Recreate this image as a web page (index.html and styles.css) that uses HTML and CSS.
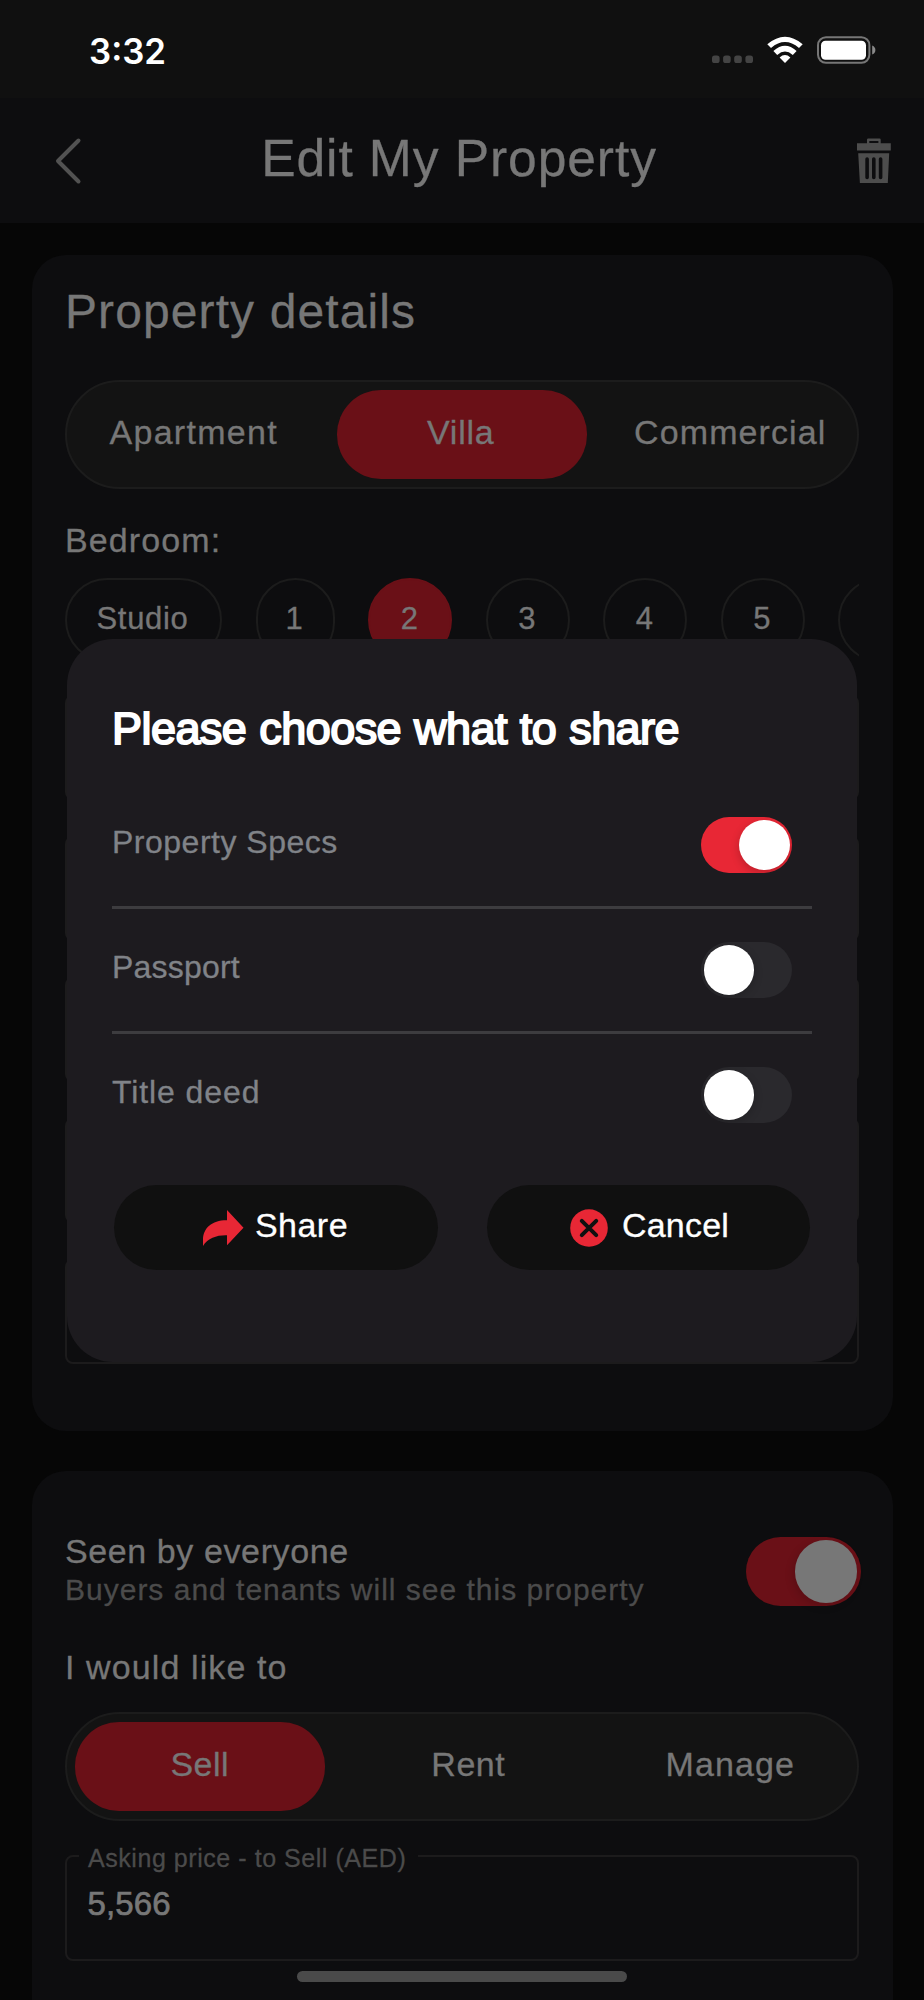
FILE: index.html
```html
<!DOCTYPE html>
<html lang="en">
<head>
<meta charset="utf-8">
<title>Edit My Property</title>
<link rel="stylesheet" href="styles.css">
</head>
<body>
<div class="screen">
  <div class="status">
    <span class="time">3:32</span>
    <div class="status-icons">
      <svg class="signal" width="42" height="28" viewBox="0 0 42 28"><g fill="#444"><rect x="0" y="19.5" width="7.6" height="7.6" rx="2.6"/><rect x="11.1" y="19.5" width="7.6" height="7.6" rx="2.6"/><rect x="22.2" y="19.5" width="7.6" height="7.6" rx="2.6"/><rect x="33.4" y="19.5" width="7.6" height="7.6" rx="2.6"/></g></svg>
      <svg class="wifi" width="36" height="28" viewBox="0 0 36 28"><g fill="#fff"><path d="M18 27 L12.6 21.4 Q18 16.8 23.4 21.4 Z"/><path d="M6.4 14.9 Q18 4.6 29.6 14.9 L25.8 18.9 Q18 12 10.2 18.9 Z"/><path d="M0.3 8.2 Q18 -6.9 35.7 8.2 L32 12 Q18 0.2 4 12 Z"/></g></svg>
      <svg class="battery" width="60" height="28" viewBox="0 0 60 28"><rect x="1" y="1.2" width="51.4" height="25.6" rx="8" fill="none" stroke="#767676" stroke-width="2"/><rect x="4" y="4.8" width="45" height="19" rx="4.5" fill="#fff"/><path d="M55.2 9.5 Q58.4 11 58.4 14 Q58.4 17 55.2 18.6 Z" fill="#8a8a8a"/></svg>
    </div>
  </div>

  <header class="header">
    <svg class="back" width="28" height="48" viewBox="0 0 28 48"><path d="M24.5 4 L4 24.5 L24.5 45" transform="translate(0 -.5)" fill="none" stroke="#525252" stroke-width="4" stroke-linecap="round" stroke-linejoin="round"/></svg>
    <h1 class="title">Edit My Property</h1>
    <svg class="trash" width="34" height="46" viewBox="0 0 34 46"><g fill="#4d4d4d"><path fill-rule="evenodd" d="M10 6V1.8Q10 .5 11.3 .5H22.4Q23.7 .5 23.7 1.8V6ZM12.3 5H21.4V3H12.3Z"/><path d="M0 5.2H33.8V12.4H0Z"/><path fill-rule="evenodd" d="M1.2 15.2H32.2L30.8 45H2.9ZM8.3 21V39.5A1.8 1.8 0 0 0 11.9 39.5V21A1.8 1.8 0 0 0 8.3 21ZM15 21V39.5A1.8 1.8 0 0 0 18.6 39.5V21A1.8 1.8 0 0 0 15 21ZM21.8 21V39.5A1.8 1.8 0 0 0 25.4 39.5V21A1.8 1.8 0 0 0 21.8 21Z"/></g></svg>
  </header>

  <main class="content">
    <section class="card card-details">
      <h2 class="card-title">Property details</h2>
      <div class="segments segments-type">
        <span class="segment nudge-left">Apartment</span>
        <span class="segment active villa">Villa</span>
        <span class="segment nudge-right">Commercial</span>
      </div>
      <div class="label label-bedroom">Bedroom:</div>
      <div class="chips">
        <span class="chip chip-wide">Studio</span>
        <span class="chip chip-one">1</span>
        <span class="chip chip-active">2</span>
        <span class="chip">3</span>
        <span class="chip">4</span>
        <span class="chip">5</span>
        <span class="chip"></span>
      </div>
      <div class="fields">
        <div class="field"></div>
        <div class="field"></div>
        <div class="field"></div>
        <div class="field"></div>
        <div class="field"></div>
      </div>
    </section>

    <section class="card card-listing">
      <div class="visibility">
        <div>
          <div class="visibility-title">Seen by everyone</div>
          <div class="visibility-hint">Buyers and tenants will see this property</div>
        </div>
        <div class="switch-large"><div class="knob-large"></div></div>
      </div>
      <div class="label label-intent">I would like to</div>
      <div class="segments segments-intent">
        <span class="segment active sell">Sell</span>
        <span class="segment nudge-right rent">Rent</span>
        <span class="segment nudge-right">Manage</span>
      </div>
      <div class="field price">
        <span class="price-label">Asking price - to Sell (AED)</span>
        <span class="price-value">5,566</span>
      </div>
    </section>
  </main>

  <div class="modal">
    <h3 class="modal-title">Please choose what to share</h3>
    <div class="option"><span class="option-name">Property Specs</span><div class="switch on"><div class="knob"></div></div></div>
    <div class="option"><span class="option-name passport">Passport</span><div class="switch"><div class="knob"></div></div></div>
    <div class="option last"><span class="option-name deed">Title deed</span><div class="switch"><div class="knob"></div></div></div>
    <div class="actions">
      <div class="button share">
        <svg width="41" height="36" viewBox="0 0 41 36"><path d="M24 0 L40.5 17.7 L24 35.2 V25.3 C14 25 5 28 0 36 V30 C0 18 9 10 24 10.2 Z" fill="#e82735"/></svg>
        <span class="button-text">Share</span>
      </div>
      <div class="button cancel">
        <svg width="38" height="38" viewBox="0 0 38 38"><circle cx="19" cy="19" r="18.8" fill="#e82735"/><path d="M11.8 11.8 L26.2 26.2 M26.2 11.8 L11.8 26.2" stroke="#101010" stroke-width="4" stroke-linecap="round"/></svg>
        <span class="button-text">Cancel</span>
      </div>
    </div>
  </div>
  <div class="home-indicator"></div>
</div>
</body>
</html>
```

FILE: styles.css
```css
* { box-sizing: border-box; }
body {
  margin: 0;
  background: #060606;
  font-family: "Liberation Sans", Arial, sans-serif;
  color: #777;
  -webkit-text-stroke: 0.3px currentColor;
}
h1, h2, h3 { margin: 0; font-weight: 400; }
svg { display: block; flex: none; }
.screen {
  position: relative;
  width: 924px;
  height: 2000px;
  overflow: hidden;
}

.status {
  display: flex;
  justify-content: space-between;
  height: 98px;
  padding: 36px 48px 0 89px;
  background: #101010;
}
.time {
  font: 600 34.8px/30px Inter, sans-serif;
  letter-spacing: 0;
  color: #fff;
  -webkit-text-stroke: 0;
}
.status-icons { display: flex; }
.wifi { margin-left: 13px; }
.battery { margin-left: 14px; margin-right: -1px; }

.header {
  display: flex;
  align-items: center;
  justify-content: space-between;
  height: 125px;
  padding: 0 33px 0 54px;
  background: #0d0d0f;
}
.title {
  font-size: 51.6px;
  line-height: 60px;
  letter-spacing: 0.9px;
  padding: 0 21px 5px 0;
  white-space: nowrap;
}

.content { padding: 32px 31px 0 32px; }
.card {
  padding: 28px 34px 0 33px;
  border-radius: 34px;
  background: #0d0d0f;
}
.card-details { height: 1176px; }
.card-title {
  font-size: 48px;
  line-height: 58px;
  letter-spacing: 1.1px;
}
.segments {
  display: grid;
  grid-template-columns: repeat(3, 249.5px);
  column-gap: 12.5px;
  width: 794px;
  height: 109px;
  padding: 8px;
  border: 2px solid #1c1c1c;
  border-radius: 55px;
  background: #131313;
}
.segments-type { margin-top: 39px; }
.segments-intent { margin-top: 25px; }
.segment {
  display: flex;
  align-items: center;
  justify-content: center;
  padding-bottom: 5px;
  border-radius: 44px;
  font-size: 34px;
  letter-spacing: 1.1px;
}
.active { background: #6a1017; }
.villa { padding-right: 2px; letter-spacing: 0.8px; }
.sell { letter-spacing: 0.5px; }
.rent { letter-spacing: 0.5px; }
.nudge-left { padding-right: 12px; letter-spacing: 1.3px; }
.nudge-right { padding-left: 13px; }

.label {
  font-size: 34px;
  line-height: 40px;
  letter-spacing: 1.1px;
}
.label-bedroom { margin-top: 31px; }
.label-intent { margin-top: 37px; }
.chips {
  display: flex;
  gap: 33.5px;
  width: 794px;
  margin-top: 18px;
  overflow: hidden;
}
.chip {
  display: flex;
  align-items: center;
  justify-content: center;
  flex: none;
  width: 84px;
  height: 84px;
  padding: 0 2px 2px 0;
  border: 2px solid #1c1c1c;
  border-radius: 42px;
  font-size: 31px;
}
.chip-wide { width: 157px; letter-spacing: 0.7px; }
.chip-one { width: 79px; margin-right: 0.4px; }
.chip-active { border-color: #6a1017; background: #6a1017; }
.fields {
  display: flex;
  flex-direction: column;
  gap: 36px;
  margin-top: 33px;
}
.field {
  width: 794px;
  height: 105px;
  border: 2px solid #1c1b1c;
  border-radius: 8px;
}

.card-listing {
  height: 600px;
  margin-top: 40px;
  padding-top: 61px;
}
.visibility {
  display: flex;
  justify-content: space-between;
}
.visibility-title {
  font-size: 34px;
  line-height: 38px;
  letter-spacing: 0.6px;
}
.visibility-hint {
  font-size: 30px;
  line-height: 40px;
  letter-spacing: 1px;
  color: #4b4b4b;
}
.switch-large {
  display: flex;
  justify-content: flex-end;
  width: 114.5px;
  height: 69px;
  margin: 5px -1.5px 0 0;
  padding: 3px 3.5px;
  border-radius: 35px;
  background: #6a1017;
}
.knob-large {
  width: 62.5px;
  height: 62.5px;
  border-radius: 50%;
  background: #777;
  box-shadow: -2px 3px 8px rgba(0, 0, 0, 0.15);
}
.price {
  position: relative;
  height: 106px;
  margin-top: 34px;
  padding: 28px 20.5px;
}
.price-label {
  position: absolute;
  left: 12px;
  top: -13px;
  padding: 0 12px 0 9px;
  background: #0d0d0f;
  font-size: 25px;
  line-height: 28px;
  letter-spacing: 0.55px;
  color: #4b4b4b;
  white-space: nowrap;
}
.price-value {
  display: block;
  font-size: 33px;
  line-height: 38px;
  letter-spacing: 0.1px;
  -webkit-text-stroke: 0.7px currentColor;
}

.modal {
  position: absolute;
  left: 67px;
  top: 638.5px;
  width: 790px;
  height: 723px;
  padding: 63px 45px 0;
  border-radius: 46px;
  background: #1d1b1f;
}
.modal-title {
  margin-bottom: 28.5px;
  font-size: 45px;
  line-height: 54px;
  letter-spacing: -0.55px;
  word-spacing: 1px;
  color: #fff;
  -webkit-text-stroke: 1.9px #fff;
}
.option {
  display: flex;
  align-items: center;
  justify-content: space-between;
  height: 125px;
  padding-right: 20px;
  border-bottom: 3px solid #3d3c3f;
}
.last { height: 122px; border-bottom: 0; }
.option-name {
  padding-bottom: 6px;
  font-size: 32px;
  letter-spacing: 0.5px;
  color: #808388;
}
.passport { letter-spacing: 0.2px; }
.deed { letter-spacing: 0.9px; }
.switch {
  display: flex;
  overflow: hidden;
  width: 91px;
  height: 56px;
  padding: 3px 2.5px;
  border-radius: 28px;
  background: #2a292d;
}
.on { justify-content: flex-end; background: #e82735; }
.knob {
  width: 50.5px;
  height: 50px;
  border-radius: 50%;
  background: #fff;
  box-shadow: 0 3px 10px rgba(0, 0, 0, 0.2);
}
.actions {
  display: flex;
  gap: 49px;
  margin: 29px 0 0 2px;
}
.button {
  display: flex;
  align-items: center;
  justify-content: center;
  width: 323.5px;
  height: 85px;
  border-radius: 43px;
  background: #101010;
  font-size: 34px;
  color: #fff;
}
.share { gap: 10.5px; letter-spacing: 0.5px; }
.cancel { gap: 14px; padding-left: 2.5px; letter-spacing: 0.2px; }
.button-text { padding-bottom: 5px; }
.home-indicator {
  position: absolute;
  left: 297px;
  top: 1971px;
  width: 330px;
  height: 11px;
  border-radius: 6px;
  background: #4a4a4a;
}
```
